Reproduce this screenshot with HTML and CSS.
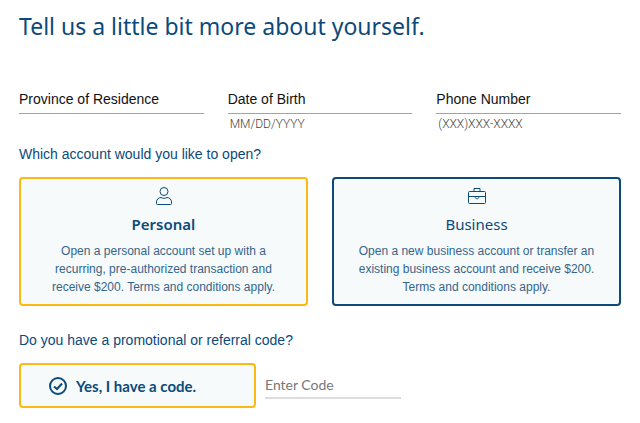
FILE: index.html
```html
<!DOCTYPE html>
<html lang="en">
<head>
    <meta charset="UTF-8"/>
    <meta name="viewport" content="width=device-width, initial-scale=1.0"/>
    <title>Open an account</title>
    <link rel="stylesheet" href="styles.css">
</head>
<body>
<main>
    <h1>Tell us a little bit more about yourself.</h1>

    <form>
        <div class="fields">
            <div class="field">
                <input type="text" aria-label="Province of Residence" placeholder="Province of Residence"/>
            </div>
            <div class="field">
                <input type="text" aria-label="Date of Birth" aria-describedby="dob-hint" placeholder="Date of Birth"/>
                <span class="hint" id="dob-hint">MM/DD/YYYY</span>
            </div>
            <div class="field">
                <input type="tel" aria-label="Phone Number" aria-describedby="phone-hint" placeholder="Phone Number"/>
                <span class="hint" id="phone-hint">(XXX)XXX-XXXX</span>
            </div>
        </div>

        <h2 id="account-question">Which account would you like to open?</h2>
        <div class="accounts" role="radiogroup" aria-labelledby="account-question">
            <label class="card">
                <input type="radio" name="account" value="personal" checked/>
                <svg class="card-icon" viewBox="0 0 20 20" aria-hidden="true">
                    <circle cx="10" cy="5.5" r="4"/>
                    <path d="M2.5 17.5V16C2.5 13.5 4.5 11.5 7 11.5C8.5 12.5 11.5 12.5 13 11.5C15.5 11.5 17.5 13.5 17.5 16V17.5Q17.5 18.5 16.5 18.5H3.5Q2.5 18.5 2.5 17.5Z"/>
                </svg>
                <span class="card-title">Personal</span>
                <span class="card-text">Open a personal account set up with a recurring, pre-authorized transaction and receive $200. Terms and conditions apply.</span>
            </label>
            <label class="card">
                <input type="radio" name="account" value="business"/>
                <svg class="card-icon" viewBox="0 0 20 20" aria-hidden="true">
                    <rect x="1.5" y="5.5" width="17" height="12" rx="1"/>
                    <path d="M7 5.5V2.5H13V5.5M1.5 10.5H18.5M8 10.5C8 13.5 12 13.5 12 10.5"/>
                </svg>
                <span class="card-title">Business</span>
                <span class="card-text">Open a new business account or transfer an existing business account and receive $200. Terms and conditions apply.</span>
            </label>
        </div>

        <h2>Do you have a promotional or referral code?</h2>
        <div class="promo">
            <button type="button" class="promo-button" aria-pressed="true">
                <svg class="check-icon" viewBox="0 0 18 18" aria-hidden="true">
                    <circle cx="9" cy="9" r="8"/>
                    <path d="M5 9.5L8 12L13 6.5"/>
                </svg>
                Yes, I have a code.
            </button>
            <input type="text" class="promo-code" aria-label="Enter Code" placeholder="Enter Code"/>
        </div>
    </form>
</main>
</body>
</html>
```
FILE: styles.css
```css
:root {
    --navy: #0b4a7a;
    --yellow: #fdb913;
    --panel: #f6fafb;
    --line: #a3a3a3;
}

* {
    box-sizing: border-box;
}

body {
    margin: 0;
    background-color: white;
    color: var(--navy);
    font-family: "Liberation Sans", Arial, sans-serif;
}

main {
    padding: 10px 19px 16px;
}

h1 {
    margin: 0 0 48px;
    font-family: "Noto Sans", sans-serif;
    font-size: 23px;
    font-weight: 400;
    line-height: 32px;
}

h2 {
    margin: 0;
    font-size: 14px;
    font-weight: 400;
    line-height: 20px;
}

input {
    width: 100%;
    padding: 0;
    border: none;
    background: none;
    outline: none;
}

.fields {
    display: grid;
    grid-template-columns: repeat(3, 1fr);
    gap: 24px;
    min-height: 54px;
}

.field input {
    display: block;
    height: 24px;
    padding-bottom: 6px;
    border-bottom: 1px solid var(--line);
    color: #111;
    font: 14px "Liberation Sans", Arial, sans-serif;
}

.field input::placeholder {
    color: #111;
    opacity: 1;
}

.hint {
    display: block;
    padding-left: 2px;
    color: #444;
    font-family: Roboto, sans-serif;
    font-size: 12px;
    font-weight: 300;
    line-height: 20px;
}

.accounts {
    display: grid;
    grid-template-columns: repeat(2, 1fr);
    gap: 24px;
    margin: 13px 0 24px;
}

.card {
    display: flex;
    flex-direction: column;
    align-items: center;
    position: relative;
    padding: 7px 24px 8px;
    border: 2px solid var(--navy);
    border-radius: 4px;
    background-color: var(--panel);
    text-align: center;
    cursor: pointer;
}

.card:has(input:checked) {
    border-color: var(--yellow);
}

.card input {
    position: absolute;
    opacity: 0;
}

svg {
    fill: none;
    stroke: var(--navy);
}

.card-icon {
    width: 20px;
    height: 20px;
}

.card-title {
    margin: 6px 0;
    font-family: "Noto Sans", sans-serif;
    font-size: 15px;
    line-height: 24px;
}

.card input:checked ~ .card-title {
    font-weight: 600;
}

.card-text {
    color: #34658c;
    font-size: 12px;
    line-height: 18px;
}

.promo {
    display: flex;
    align-items: center;
    gap: 9px;
    margin-top: 13px;
}

.promo-button {
    display: flex;
    align-items: center;
    gap: 9px;
    width: 237px;
    height: 45px;
    padding: 0 28px;
    border: 2px solid var(--yellow);
    border-radius: 4px;
    background-color: var(--panel);
    color: var(--navy);
    font: 700 15px Lato, sans-serif;
    cursor: pointer;
}

.check-icon {
    width: 18px;
    height: 18px;
    stroke-width: 2;
}

.promo-code {
    width: 136px;
    height: 26px;
    border-bottom: 2px solid #ddd;
    color: #777;
    font: 14px Lato, sans-serif;
}

.promo-code::placeholder {
    color: #777;
    opacity: 1;
}
```
